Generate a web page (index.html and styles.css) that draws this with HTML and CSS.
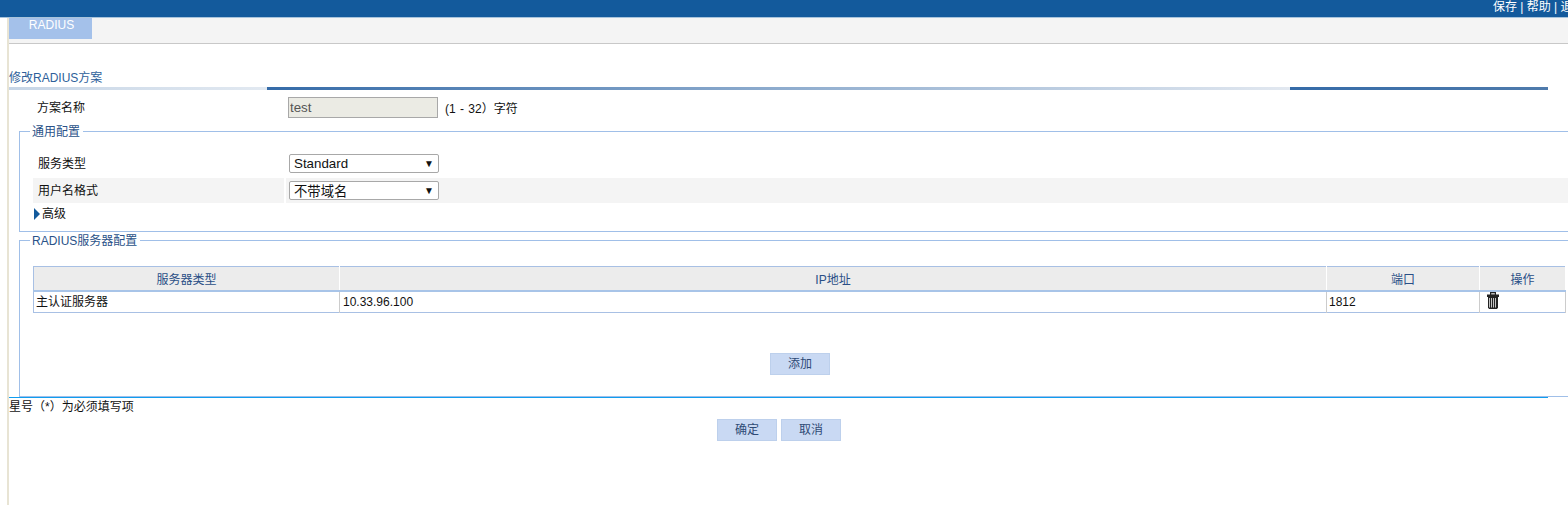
FILE: index.html
```html
<!DOCTYPE html>
<html lang="zh">
<head>
<meta charset="utf-8">
<title>修改RADIUS方案</title>
<link rel="stylesheet" href="styles.css">
</head>
<body>
<header class="topbar">
  <nav class="toplinks">保存 | 帮助 | 退出</nav>
</header>
<div class="page">
  <div class="tabbar"><div class="tab">RADIUS</div></div>
  <h1 class="title">修改RADIUS方案</h1>
  <div class="title-rule"><span class="rule-a"></span><span class="rule-b"></span><span class="rule-c"></span></div>
  <div class="name-row">
    <label class="name-label">方案名称</label>
    <input class="name-input" type="text" value="test" disabled>
    <span class="hint">(1 - 32）字符</span>
  </div>
  <fieldset class="group group-general">
    <legend>通用配置</legend>
    <div class="form-row first">
      <div class="row-label">服务类型</div>
      <div class="row-field"><div class="select"><span>Standard</span><i class="caret">▼</i></div></div>
    </div>
    <div class="form-row shaded">
      <div class="row-label">用户名格式</div>
      <div class="row-field"><div class="select"><span>不带域名</span><i class="caret">▼</i></div></div>
    </div>
    <div class="advanced"><span class="arrow"></span>高级</div>
  </fieldset>
  <fieldset class="group group-servers">
    <legend>RADIUS服务器配置</legend>
    <table class="servers">
      <colgroup><col class="c1"><col class="c2"><col class="c3"><col class="c4"></colgroup>
      <thead><tr><th>服务器类型</th><th>IP地址</th><th>端口</th><th>操作</th></tr></thead>
      <tbody><tr>
        <td>主认证服务器</td><td>10.33.96.100</td><td>1812</td>
        <td><svg class="trash" width="12" height="17" viewBox="0 0 12 17"><path d="M3 0h6v2.500h3V5H0V2.500h3z" fill="#222"/><path d="M4.200 1h3.600v1.500H4.200z" fill="#bbb"/><path d="M1 5h10v10.500L10 17H2l-1-1.500z" fill="#222"/><path d="M2.500 6v9.500M4.500 6v9.500M6.500 6v9.500M8.500 6v9.500" stroke="#c4c4c4" stroke-width="1"/></svg></td>
      </tr></tbody>
    </table>
    <div class="add-wrap"><button class="btn" type="button">添加</button></div>
  </fieldset>
  <div class="footnote">星号（*）为必须填写项</div>
  <div class="actions"><button class="btn" type="button">确定</button><button class="btn" type="button">取消</button></div>
</div>
</body>
</html>
```
FILE: styles.css
```css
* { box-sizing: border-box; }
html, body { margin: 0; height: 100%; overflow: hidden; background: #fff; }
body { font: 12px/16px "Liberation Sans", "Noto Sans CJK SC", sans-serif; color: #111; }
.topbar { height: 18px; background: #135a9c; border-bottom: 1px solid #a8c4dc; display: flex; justify-content: flex-end; overflow: hidden; }
.toplinks { width: 75px; flex: none; white-space: nowrap; color: #fff; line-height: 14px; }
.page { margin-left: 7px; border-left: 2px solid #e8e4d4; height: 487px; width: 1700px; }
.tabbar { height: 26px; width: 1559px; background: #f4f4f4; border-bottom: 1px solid #c8c8c8; }
.tab { width: 83px; height: 21px; padding-left: 2px; background: #a4c1ea; color: #fff; text-align: center; line-height: 14px; }
.title { margin: 26px 0 0; font-size: 12px; font-weight: 400; line-height: 16px; color: #2e5f9a; height: 17px; }
.title-rule { display: flex; height: 3px; width: 1539px; }
.rule-a { width: 258px; background: linear-gradient(90deg, #c6d5e6, #e2e9f1); }
.rule-b { width: 1023px; background: linear-gradient(90deg, #356ba8, #8eacce 50%, #e2e8f0); }
.rule-c { width: 258px; background: linear-gradient(90deg, #356ba8, #4f7bac); }
.name-row { display: flex; align-items: center; height: 21px; margin-top: 7px; }
.name-label { width: 279px; padding-left: 28px; padding-top: 1px; }
.name-input { width: 150px; height: 21px; margin: 0; padding: 0 1px; border: 1px solid #a8a8a8; background: #ebebe4; color: #555; font-family: inherit; font-size: 13.33px; }
.hint { margin-left: 7px; padding-top: 2px; word-spacing: 1px; }
.group { margin: 0 0 0 10px; padding: 0; width: 1600px; border: 1px solid #a0bfe8; min-width: 0; }
.group legend { margin-left: 10px; padding: 0 3px 0 2px; color: #2a5288; line-height: 18px; height: 16px; }
.group-general { margin-top: 5px; height: 109px; }
.group-servers { margin-top: 0; height: 165px; }
.form-row { display: flex; width: 1535px; height: 25px; margin-left: 13px; }
.form-row.first { margin-top: 12px; margin-bottom: 2px; }
.row-label { width: 251px; padding-left: 5px; line-height: 27px; }
.row-field { flex: 1; margin-left: 2px; padding-left: 3px; padding-top: 3px; }
.shaded .row-label, .shaded .row-field { background: #f4f4f4; }
.select { width: 150px; height: 19px; border: 1px solid #a8a8a8; border-radius: 2px; background: #fff; display: flex; justify-content: space-between; padding: 0 4px; font-size: 13.33px; line-height: 17px; color: #111; }
.shaded .select span { position: relative; top: 1px; }
.caret { font-style: normal; font-size: 10px; }
.advanced { margin: 3px 0 0 14px; display: flex; align-items: center; height: 16px; }
.arrow { width: 0; height: 0; border-left: 6px solid #135a9c; border-top: 6px solid transparent; border-bottom: 6px solid transparent; margin-right: 2px; }
.servers { margin: 18px 0 0 13px; width: 1532px; table-layout: fixed; border-collapse: collapse; border: 1px solid #a8c0e4; }
.c1 { width: 306px; } .c2 { width: 987px; } .c3 { width: 153px; } .c4 { width: 86px; }
.servers th { height: 24px; background: #ececec; border-bottom: 2px solid #a8c4e8; border-right: 1px solid #fff; font-weight: 400; color: #2a4f86; padding: 4px 0 0; }
.servers td { height: 22px; padding: 0 3px 0 2px; border-right: 1px solid #ccc; }
.servers td:nth-child(2) { padding-left: 3px; }
.servers td:last-child { padding: 0 0 3px 7px; }
.trash { display: block; }
.add-wrap { margin: 40px 0 0 750px; }
.btn { display: block; width: 60px; height: 22px; padding: 0; background: #c9d9f3; border: 1px solid #bdd0ec; color: #2e4a75; font: inherit; }
.footnote { width: 1539px; height: 20px; border-top: 1px solid #0f9df0; line-height: 18px; }
.actions { display: flex; gap: 4px; margin: 2px 0 0 708px; }
```
